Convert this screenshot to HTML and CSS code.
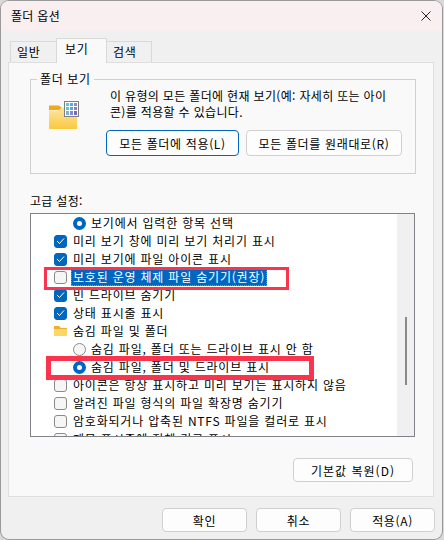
FILE: index.html
```html
<!DOCTYPE html>
<html lang="ko">
<head>
<meta charset="utf-8">
<title>폴더 옵션</title>
<link rel="stylesheet" href="styles.css">
</head>
<body>
<div class="window">
  <div class="titlebar">
    <span class="title">폴더 옵션</span>
    <svg class="close" width="10" height="10" viewBox="0 0 10 10"><path d="M0.5 0.5L9.500 9.500M9.500 0.5L0.5 9.500" stroke="#222" stroke-width="1" fill="none"/></svg>
  </div>
  <div class="content">
    <div class="tabs">
      <div class="tab">일반</div>
      <div class="tab active">보기</div>
      <div class="tab last">검색</div>
    </div>
    <div class="panel">
      <div class="group">
        <div class="legend">폴더 보기</div>
        <svg class="folder-big" width="30" height="28" viewBox="0 0 30 28">
          <defs><linearGradient id="fg" x1="0" y1="0" x2="0" y2="1"><stop offset="0" stop-color="#fde7a4"/><stop offset="1" stop-color="#fbc83f"/></linearGradient></defs>
          <path d="M0 4.500h10l3 2.500h2v2H0z" fill="#eeaa1c"/>
          <path d="M0 9.500h9l4-3h15v21.500H0z" fill="url(#fg)"/>
          <rect x="15.500" y="0.500" width="14" height="15" fill="#fff" stroke="#7f7f7f"/>
          <rect x="17" y="2" width="3" height="3" fill="#5fc8dc"/><rect x="21" y="2" width="3" height="3" fill="#5aa9dc"/><rect x="25" y="2" width="3" height="3" fill="#7f93d0"/>
          <rect x="17" y="6" width="3" height="3" fill="#5fc8dc"/><rect x="21" y="6" width="3" height="3" fill="#6aa2d4"/><rect x="25" y="6" width="3" height="3" fill="#8a7fc8"/>
          <rect x="17" y="10" width="3" height="4" fill="#7fb0d8"/><rect x="21" y="10" width="3" height="4" fill="#7f8fd0"/><rect x="25" y="10" width="3" height="4" fill="#7a68b8"/>
        </svg>
        <div class="group-body">
          <p class="desc">이 유형의 모든 폴더에 현재 보기(예: 자세히 또는 아이<br>콘)를 적용할 수 있습니다.</p>
          <div class="group-buttons">
            <button class="btn primary apply-all">모든 폴더에 적용(L)</button>
            <button class="btn reset-all">모든 폴더를 원래대로(R)</button>
          </div>
        </div>
      </div>
      <div class="adv-label">고급 설정:</div>
      <div class="list">
        <div class="rows">
          <div class="row sub"><span class="radio on"></span><span class="txt">보기에서 입력한 항목 선택</span></div>
          <div class="row"><span class="check on"><svg width="9" height="8" viewBox="0 0 9 8"><path d="M1 4l2.500 2.500L8 1.500" stroke="#fff" stroke-width="1" fill="none"/></svg></span><span class="txt">미리 보기 창에 미리 보기 처리기 표시</span></div>
          <div class="row"><span class="check on"><svg width="9" height="8" viewBox="0 0 9 8"><path d="M1 4l2.500 2.500L8 1.500" stroke="#fff" stroke-width="1" fill="none"/></svg></span><span class="txt">미리 보기에 파일 아이콘 표시</span></div>
          <div class="row"><span class="check"></span><span class="txt selected">보호된 운영 체제 파일 숨기기(권장)</span></div>
          <div class="row"><span class="check on"><svg width="9" height="8" viewBox="0 0 9 8"><path d="M1 4l2.500 2.500L8 1.500" stroke="#fff" stroke-width="1" fill="none"/></svg></span><span class="txt">빈 드라이브 숨기기</span></div>
          <div class="row"><span class="check on"><svg width="9" height="8" viewBox="0 0 9 8"><path d="M1 4l2.500 2.500L8 1.500" stroke="#fff" stroke-width="1" fill="none"/></svg></span><span class="txt">상태 표시줄 표시</span></div>
          <div class="row"><svg class="folder-small" width="13" height="12" viewBox="0 0 13 12"><path d="M0 1h5l2 2h6v2H0z" fill="#eeb02a"/><path d="M0 4h13v7H0z" fill="#fcd668"/></svg><span class="txt">숨김 파일 및 폴더</span></div>
          <div class="row sub"><span class="radio"></span><span class="txt">숨김 파일, 폴더 또는 드라이브 표시 안 함</span></div>
          <div class="row sub"><span class="radio on"></span><span class="txt">숨김 파일, 폴더 및 드라이브 표시</span></div>
          <div class="row"><span class="check"></span><span class="txt">아이콘은 항상 표시하고 미리 보기는 표시하지 않음</span></div>
          <div class="row"><span class="check"></span><span class="txt">알려진 파일 형식의 파일 확장명 숨기기</span></div>
          <div class="row"><span class="check"></span><span class="txt">암호화되거나 압축된 NTFS 파일을 컬러로 표시</span></div>
          <div class="row"><span class="check"></span><span class="txt">제목 표시줄에 전체 경로 표시</span></div>
        </div>
        <div class="scrollbar"><div class="thumb"></div></div>
      </div>
      <div class="restore-row"><button class="btn restore">기본값 복원(D)</button></div>
    </div>
    <div class="footer">
      <button class="btn foot">확인</button>
      <button class="btn foot">취소</button>
      <button class="btn foot">적용(A)</button>
    </div>
  </div>
  <div class="mark mark-one"></div>
  <div class="mark mark-two"></div>
</div>
</body>
</html>
```
FILE: styles.css
```css
* { box-sizing: border-box; }
html, body { margin: 0; padding: 0; width: 444px; height: 540px; overflow: hidden; background: #d9d9d9; }
body { font-family: "Noto Sans CJK KR", "Noto Sans", sans-serif; font-size: 12px; color: #000; }
.window { position: relative; margin: 1px 0 0 1px; width: 441px; height: 538px; background: #f0f0f0; border-radius: 8px; overflow: hidden; box-shadow: 0 0 0 1px #9a9a9a; }
.titlebar { height: 30px; background: #f9eff1; display: flex; align-items: center; justify-content: space-between; padding: 0 11px 0 10px; }
.title { font-size: 12px; line-height: 30px; letter-spacing: 0.3px; }
.content { padding: 9px 8px 0 7px; }
.tabs { display: flex; align-items: flex-end; height: 22px; padding-left: 2px; position: relative; z-index: 1; }
.tab { height: 21px; width: 47px; background: #f0f0f0; border: 1px solid #d9d9d9; border-bottom: 0; text-align: left; padding-left: 6px; line-height: 20px; letter-spacing: 0.6px; }
.tab.active { height: 25px; width: 51px; background: #f9f9f9; margin: 0 -1px -1px -1px; padding-left: 8px; line-height: 20px; position: relative; z-index: 2; }
.tab.last { width: 46px; padding-left: 6px; }
.panel { height: 435px; background: #f9f9f9; border: 1px solid #dfdfdf; padding: 16px 18px 0 21px; }
.group { width: 386px; height: 95px; border: 1px solid #d0d0d0; position: relative; padding: 8px 12px 0 79px; }
.legend { position: absolute; left: 6px; top: -8px; padding: 0 3px; background: #f9f9f9; line-height: 14px; letter-spacing: 0.6px; }
.folder-big { position: absolute; left: 18px; top: 21px; }
.desc { margin: 0; line-height: 16px; letter-spacing: 0.33px; white-space: nowrap; }
.group-buttons { display: flex; gap: 7px; margin-top: 10px; margin-left: -4px; }
.btn { font: inherit; color: #000; background: #fdfdfd; border: 1px solid #d0d0d0; border-radius: 4px; padding: 0; letter-spacing: 0.65px; height: 26px; }
.btn.primary { border: 1px solid #0067c0; }
.apply-all { width: 133px; }
.reset-all { width: 156px; }
.adv-label { margin-top: 20px; line-height: 14px; letter-spacing: 0.3px; }
.list { margin-top: 5px; width: 385px; height: 224px; background: #fff; border: 1px solid #7f8388; display: flex; overflow: hidden; }
.rows { flex: 1; }
.row { height: 18px; display: flex; align-items: center; padding-left: 23px; white-space: nowrap; letter-spacing: 0.8px; }
.row.sub { padding-left: 42px; }
.txt { margin-left: 6px; line-height: 18px; }
.sub .txt { margin-left: 5px; }
.txt.selected { background: #0067c0; color: #fff; outline: 1px dotted #e08a00; outline-offset: -1px; padding: 0 2px; margin-left: 4px; }
.check { width: 13px; height: 13px; flex: none; border: 1px solid #8a8a8a; border-radius: 3px; background: #f6f6f6; display: flex; align-items: center; justify-content: center; }
.check.on { background: #0067c0; border-color: #0067c0; }
.radio { width: 13px; height: 13px; flex: none; border-radius: 50%; border: 1px solid #8a8a8a; background: #f6f6f6; }
.radio.on { border: 4px solid #0067c0; background: #fff; }
.folder-small { flex: none; }
.scrollbar { width: 17px; height: 100%; background: #f0f0f0; flex: none; padding-top: 103px; display: flex; justify-content: center; }
.thumb { width: 2px; height: 68px; background: #8a8a8a; }
.restore-row { display: flex; justify-content: flex-end; margin-top: 21px; width: 383px; }
.restore { width: 120px; height: 24px; letter-spacing: 1px; }
.footer { display: flex; justify-content: flex-end; gap: 9px; padding: 11px 0 0 0; margin-right: -1px; }
.foot { width: 85px; height: 24px; }
.mark { position: absolute; border-style: solid; border-color: #f9344c; pointer-events: none; }
.mark-one { left: 43px; top: 266px; width: 245px; height: 23px; border-width: 3px; }
.mark-two { left: 45px; top: 355px; width: 268px; height: 24px; border-width: 5px; }
```
